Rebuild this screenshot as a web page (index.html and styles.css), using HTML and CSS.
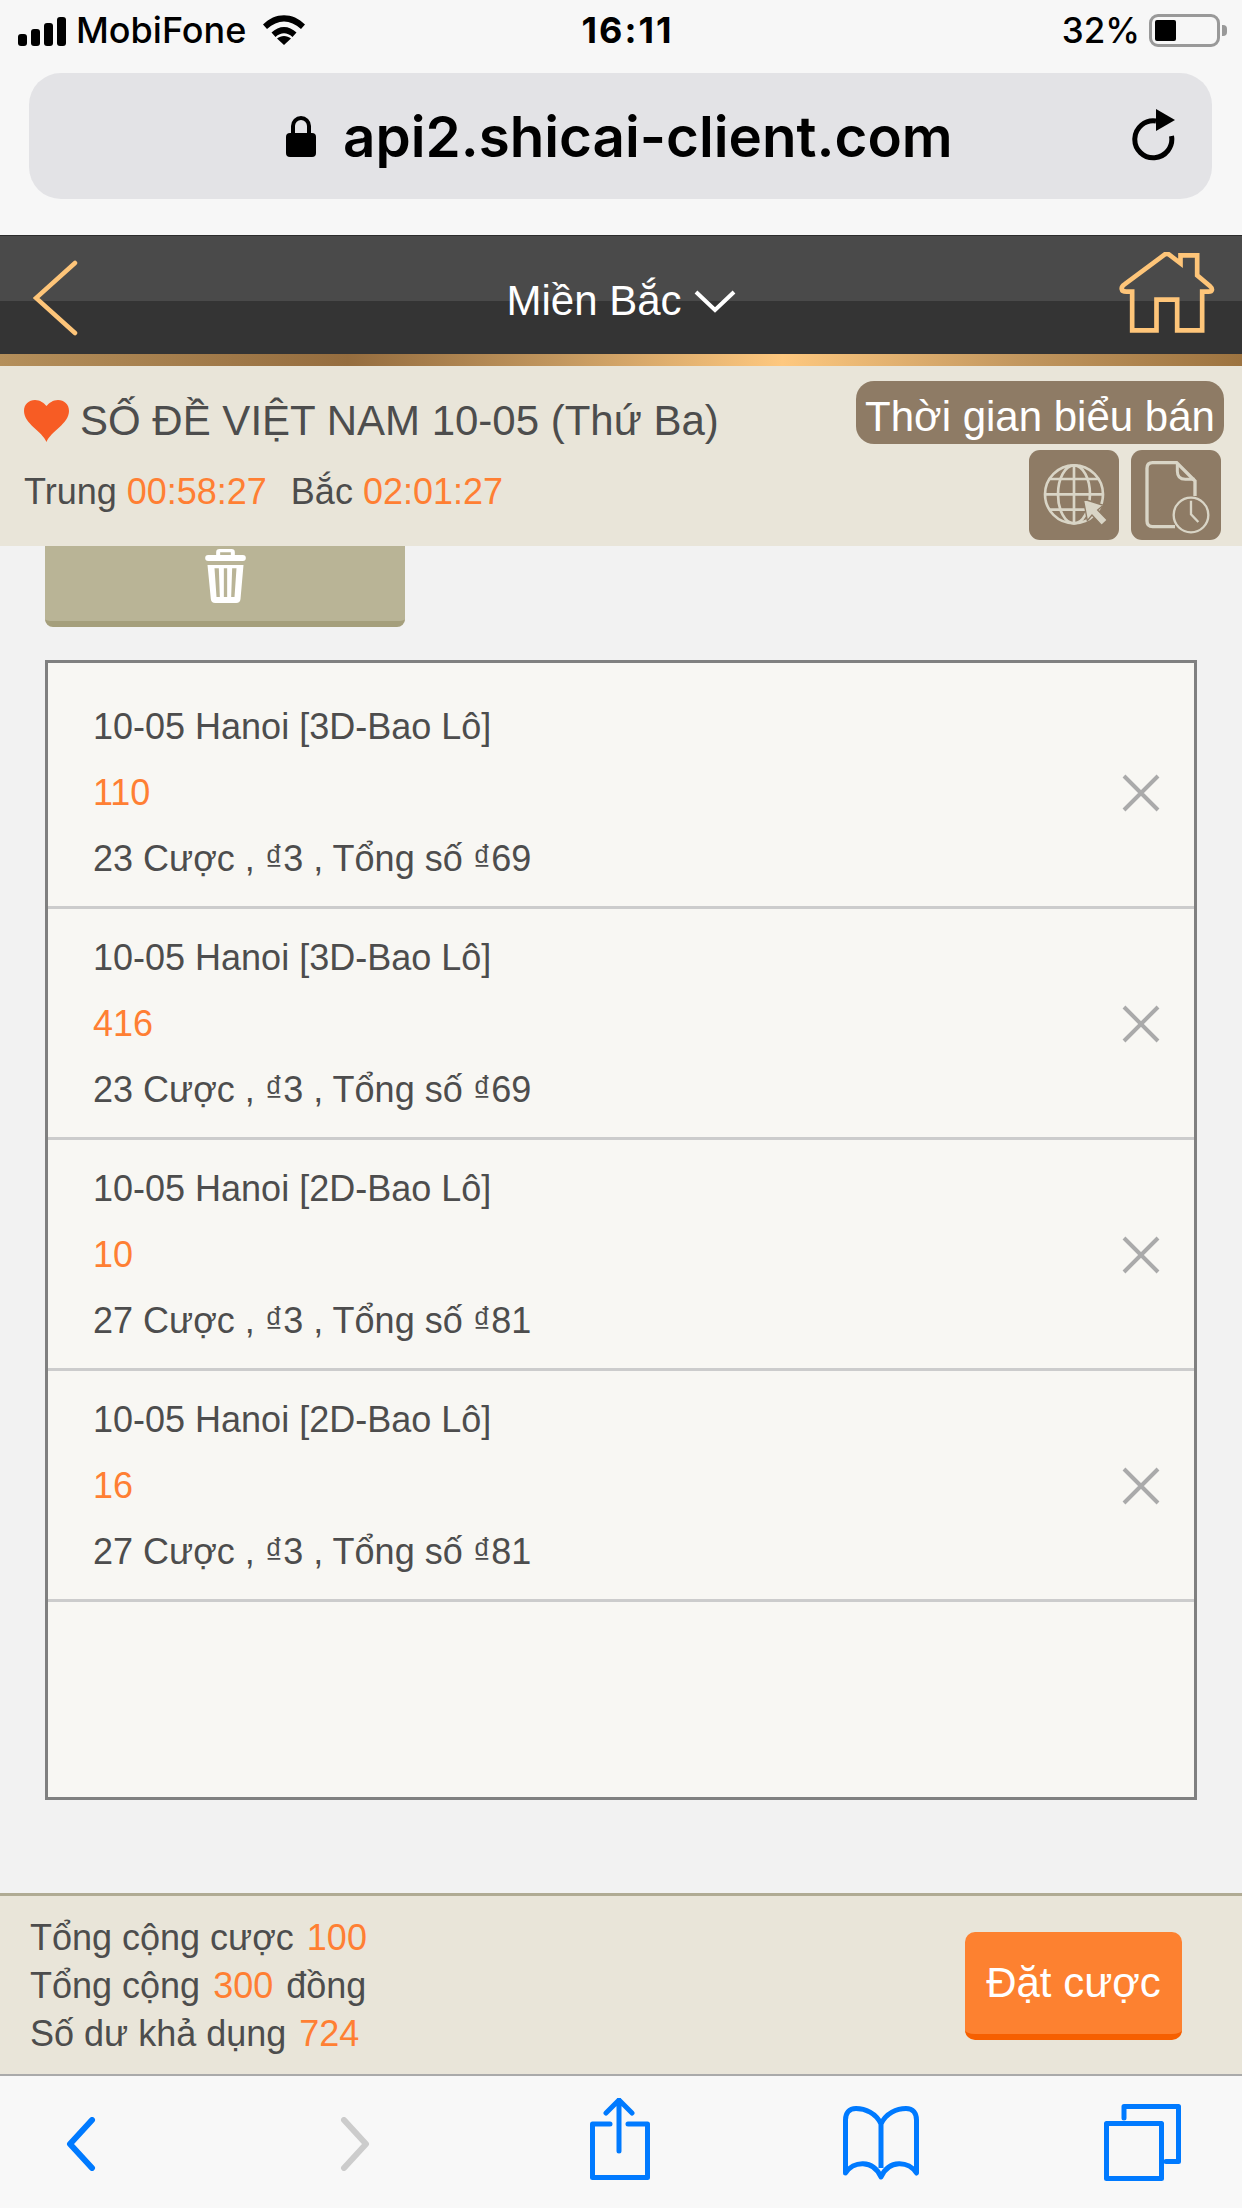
FILE: index.html
```html
<!DOCTYPE html>
<html lang="en">
<head>
    <meta charset="UTF-8">
    <meta name="viewport" content="width=device-width, initial-scale=1.0">
    <title>Số đề</title>
    <link rel="stylesheet" href="styles.css">
</head>
<body>
    <div class="chrome">
        <div class="status">
            <div class="status-left">
                <div class="signal">
                    <span class="bar bar1"></span><span class="bar bar2"></span><span class="bar bar3"></span><span class="bar bar4"></span>
                </div>
                <span class="carrier">MobiFone</span>
                <svg class="wifi" viewBox="0 0 42 30"><path d="M0 9.500C12-3 30-3 42 9.500l-4 4.500C27 4 15 4 4 14z"/><path d="M8.500 17.500C16 10 26 10 33.500 17.500l-4 4.500C24 17 18 17 12.500 22z"/><path d="M21 30l-7-6.500c4-3.500 10-3.500 14 0z"/></svg>
            </div>
            <div class="clock">16:11</div>
            <div class="status-right">
                <span class="percent">32%</span>
                <div class="battery"><span class="battery-fill"></span></div>
                <span class="battery-nub"></span>
            </div>
        </div>
        <div class="urlbar">
            <svg class="lock" viewBox="0 0 30 41"><path d="M7 20V10a8 8 0 0 1 16 0v10" fill="none" stroke="#000" stroke-width="4"/><rect y="17" width="30" height="24" rx="4"/></svg>
            <span class="url">api2.shicai-client.com</span>
            <svg class="reload" viewBox="0 0 47 55"><path d="M39.500 27A18.500 18.500 0 1 1 24 12" fill="none" stroke="#000" stroke-width="5"/><path d="M24 0l19 11-19 11z"/></svg>
        </div>
    </div>

    <div class="navbar">
        <div class="nav-side">
            <svg class="nav-back" viewBox="0 0 46 78"><path d="M42 4L3 39l39 35" fill="none" stroke="#fec579" stroke-width="4.500" stroke-linecap="round"/></svg>
        </div>
        <div class="nav-title">
            <span>Miền Bắc</span>
            <svg class="nav-caret" viewBox="0 0 42 24"><path d="M2 3l19 18L40 3" fill="none" stroke="#fff" stroke-width="4"/></svg>
        </div>
        <div class="nav-side nav-side-right">
            <svg class="nav-home" viewBox="88 487 287 243"><path d="M110 606C92 606 92 592 104 584L224 495c4-3 10-3 14 0l34 26V497h50v60l38 32c10 9 8 17-4 17H337V722H262V630H200V722H127V606z" fill="none" stroke="#fec579" stroke-width="14"/></svg>
        </div>
    </div>
    <div class="goldbar"></div>

    <div class="strip">
        <div class="strip-left">
            <div class="game-title">
                <svg class="heart" viewBox="0 0 45 42"><path d="M22.500 42C18 31 0 24 0 11 0 4 5 0 11 0c5 0 9 3 11.500 6C25 3 29 0 34 0c6 0 11 4 11 11 0 13-18 20-22.500 31z"/></svg>
                <span>SỐ ĐỀ VIỆT NAM 10-05 (Thứ Ba)</span>
            </div>
            <div class="timers">
                Trung <span class="hl">00:58:27</span><span class="timer-gap"></span>Bắc <span class="hl">02:01:27</span>
            </div>
        </div>
        <div class="strip-right">
            <a class="schedule-btn">Thời gian biểu bán</a>
            <div class="icon-btns">
                <a class="icon-btn">
                    <svg viewBox="87 270 270 270" fill="none" stroke="#d9d5c6" stroke-width="8">
                        <circle cx="222" cy="403" r="87"/>
                        <ellipse cx="222" cy="403" rx="48" ry="87"/>
                        <path d="M222 316V490M135 403H309M150 357H294M150 449H294"/>
                        <path d="M250 417l60 19-17 14 29 30-17 16-29-31-14 17z" fill="#d9d5c6" stroke="#8e7b65" stroke-width="4"/>
                    </svg>
                </a>
                <a class="icon-btn">
                    <svg viewBox="393 270 270 270" fill="none" stroke="#d9d5c6" stroke-width="10">
                        <path d="M525 500H458q-17 0-17-17V325q0-17 17-17h72l55 55v45"/>
                        <path d="M532 312v22q0 24 24 24h28" stroke-width="9"/>
                        <circle cx="573" cy="465" r="52" stroke-width="7"/>
                        <path d="M573 422V463l22 23" stroke-width="7"/>
                    </svg>
                </a>
            </div>
        </div>
    </div>

    <div class="main">
        <a class="trash-btn">
            <svg viewBox="105 58 122 162"><path fill-rule="evenodd" d="M138 76V68q0-10 10-10h36q10 0 10 10v8h24q9 0 9 9t-9 9H114q-9 0-9-9t9-9zm12-8v8h32v-8zM112 106H220l-9 102q-1 12-13 12H135q-12 0-13-12zm21 10l6 86h10l-3-86zm28 0v86h10v-86zm25 0l-3 86h10l6-86z"/></svg>
        </a>
        <div class="bet-list">
            <div class="bet-row">
                <div class="bet-info">
                    <p>10-05 Hanoi [3D-Bao Lô]</p>
                    <p class="hl">110</p>
                    <p>23 Cược , ₫3 , Tổng số ₫69</p>
                </div>
                <svg class="bet-remove" viewBox="0 0 38 38"><path d="M2 2l34 34M36 2L2 36" stroke="#aaa" stroke-width="4"/></svg>
            </div>
            <div class="bet-row">
                <div class="bet-info">
                    <p>10-05 Hanoi [3D-Bao Lô]</p>
                    <p class="hl">416</p>
                    <p>23 Cược , ₫3 , Tổng số ₫69</p>
                </div>
                <svg class="bet-remove" viewBox="0 0 38 38"><path d="M2 2l34 34M36 2L2 36" stroke="#aaa" stroke-width="4"/></svg>
            </div>
            <div class="bet-row">
                <div class="bet-info">
                    <p>10-05 Hanoi [2D-Bao Lô]</p>
                    <p class="hl">10</p>
                    <p>27 Cược , ₫3 , Tổng số ₫81</p>
                </div>
                <svg class="bet-remove" viewBox="0 0 38 38"><path d="M2 2l34 34M36 2L2 36" stroke="#aaa" stroke-width="4"/></svg>
            </div>
            <div class="bet-row">
                <div class="bet-info">
                    <p>10-05 Hanoi [2D-Bao Lô]</p>
                    <p class="hl">16</p>
                    <p>27 Cược , ₫3 , Tổng số ₫81</p>
                </div>
                <svg class="bet-remove" viewBox="0 0 38 38"><path d="M2 2l34 34M36 2L2 36" stroke="#aaa" stroke-width="4"/></svg>
            </div>
        </div>
    </div>

    <div class="summary">
        <div class="totals">
            <p>Tổng cộng cược <span class="hl">100</span></p>
            <p>Tổng cộng <span class="hl">300</span> đồng</p>
            <p>Số dư khả dụng <span class="hl">724</span></p>
        </div>
        <a class="submit-btn">Đặt cược</a>
    </div>

    <div class="toolbar">
        <svg class="tool tool-back" viewBox="0 0 30 54"><path d="M26 3L4 27l22 24" fill="none" stroke="#007aff" stroke-width="6" stroke-linecap="round" stroke-linejoin="round"/></svg>
        <svg class="tool tool-forward" viewBox="0 0 30 54"><path d="M4 3l22 24L4 51" fill="none" stroke="#ccc" stroke-width="6" stroke-linecap="round" stroke-linejoin="round"/></svg>
        <svg class="tool tool-share" viewBox="0 0 60 82" fill="none" stroke="#007aff" stroke-width="5" stroke-linecap="round" stroke-linejoin="round">
            <path d="M20 26H2.500V79.500H57.500V26H38"/>
            <path d="M29 53V2M16 15L29 2l13 13"/>
        </svg>
        <svg class="tool tool-book" viewBox="0 0 76 74" fill="none" stroke="#007aff" stroke-width="5" stroke-linejoin="round">
            <path d="M38 18C33 7 22 2.500 13 2.500 6 2.500 2.500 7 2.500 14V67C10 55 30 53 38 71 46 53 66 55 73.500 67V14C73.500 7 70 2.500 63 2.500 54 2.500 43 7 38 18ZM38 18V62"/>
        </svg>
        <svg class="tool tool-tabs" viewBox="0 0 77 77" fill="none" stroke="#007aff" stroke-width="5" stroke-linecap="round" stroke-linejoin="round">
            <rect x="2.500" y="19.500" width="55" height="55"/>
            <path d="M20 14V2.500H74.500V57.500H62"/>
        </svg>
    </div>
</body>
</html>
```

FILE: styles.css
```css
* {box-sizing: border-box;}

body {
    margin: 0;
    width: 1242px;
    height: 2208px;
    overflow: hidden;
    display: flex;
    flex-direction: column;
    font-family: "Liberation Sans", Arial, sans-serif;
    font-size: 36px;
    color: #4d4d4d;
    background-color: #f2f2f2;
}

p {
    margin: 0;
}

svg {
    display: block;
    flex-shrink: 0;
}

.hl {
    color: #ff7f33;
}

/* browser chrome */
.chrome {
    height: 235px;
    background-color: #f7f7f7;
    padding-top: 13px;
    font-family: Inter, "Liberation Sans", sans-serif;
    color: #000;
}

.status {
    display: flex;
    align-items: center;
    height: 34px;
    font-size: 36px;
}

.status-left, .status-right {
    flex: 1;
    display: flex;
    align-items: center;
}

.status-left {
    padding-left: 18px;
}

.status-right {
    justify-content: flex-end;
    padding-right: 15px;
}

.signal {
    display: flex;
    align-items: flex-end;
    gap: 4px;
    height: 29px;
    margin-top: 2px;
}

.bar {
    width: 9px;
    border-radius: 3px;
    background-color: #000;
}

.bar1 { height: 12px; }
.bar2 { height: 17px; }
.bar3 { height: 23px; }
.bar4 { height: 29px; }

.carrier {
    margin-left: 10px;
    font-weight: 500;
}

.wifi {
    width: 42px;
    height: 30px;
    margin-left: 17px;
}

.clock {
    font-weight: 700;
    letter-spacing: 2px;
    margin-left: 10px;
}

.percent {
    font-size: 35px;
    font-weight: 500;
}

.battery {
    width: 71px;
    height: 33px;
    margin-left: 9px;
    padding: 3px;
    border: 3px solid #999;
    border-radius: 9px;
}

.battery-fill {
    display: block;
    width: 21px;
    height: 21px;
    border-radius: 2px;
    background-color: #000;
}

.battery-nub {
    width: 5px;
    height: 11px;
    margin-left: 2px;
    border-radius: 0 4px 4px 0;
    background-color: #999;
}

.urlbar {
    display: flex;
    align-items: center;
    height: 126px;
    margin: 26px 30px 0 29px;
    padding-left: 257px;
    border-radius: 32px;
    background-color: #e3e3e6;
}

.lock {
    width: 30px;
    height: 41px;
}

.url {
    margin-left: 27px;
    font-size: 56.5px;
    font-weight: 600;
}

.reload {
    width: 47px;
    height: 55px;
    margin-left: auto;
    margin-right: 33px;
}

/* nav */
.navbar {
    display: flex;
    align-items: center;
    height: 119px;
    border-top: 1px solid #2c2c2c;
    background: linear-gradient(#4a4a4a 0, #4a4a4a 65px, #343434 65px);
    color: #fff;
    font-size: 42px;
}

.nav-side {
    flex: 1;
    display: flex;
}

.nav-side-right {
    justify-content: flex-end;
}

.nav-back {
    width: 46px;
    height: 78px;
    margin: 6px 0 0 33px;
}

.nav-home {
    width: 96px;
    height: 81px;
    margin: 0 27px 6px 0;
}

.nav-title {
    display: flex;
    align-items: center;
    gap: 12px;
    margin-top: 11px;
}

.nav-caret {
    width: 42px;
    height: 24px;
}

.goldbar {
    height: 12px;
    background: linear-gradient(to right, #b48f5b 0%, #956d3f 28%, #c2975f 45%, #fec87f 63%, #c2975f 82%, #9c7340 100%);
}

/* game info strip */
.strip {
    position: relative;
    z-index: 1;
    display: flex;
    justify-content: space-between;
    height: 180px;
    padding: 15px 18px 0 24px;
    background-color: #e9e5d9;
}

.game-title {
    display: flex;
    align-items: center;
    gap: 11px;
    margin-top: 16px;
    font-size: 42px;
}

.heart {
    width: 45px;
    height: 42px;
    fill: #f75c24;
}

.timers {
    margin-top: 26px;
}

.timer-gap {
    display: inline-block;
    width: 24px;
}

.strip-right {
    display: flex;
    flex-direction: column;
    align-items: flex-end;
    gap: 6px;
}

.schedule-btn {
    width: 368px;
    height: 63px;
    border-radius: 18px;
    background-color: #8e7b65;
    color: #fff;
    font-size: 42px;
    line-height: 72px;
    text-align: center;
}

.icon-btns {
    display: flex;
    gap: 12px;
    margin-right: 3px;
}

.icon-btn {
    width: 90px;
    height: 90px;
    border-radius: 11px;
    background-color: #8e7b65;
}

/* bet list */
.main {
    flex: 1;
    padding: 0 45px;
}

.trash-btn {
    display: flex;
    justify-content: center;
    width: 360px;
    height: 81px;
    padding-top: 3px;
    border-bottom: 6px solid #a59f7c;
    border-radius: 0 0 8px 8px;
    background-color: #b9b496;
}

.trash-btn svg {
    width: 41px;
    height: 54px;
    fill: #fff;
}

.bet-list {
    height: 1140px;
    width: 1152px;
    margin-top: 33px;
    padding-top: 15px;
    border: 3px solid #808080;
    background-color: #f8f7f3;
}

.bet-row {
    display: flex;
    align-items: center;
    justify-content: space-between;
    height: 231px;
    padding: 0 34px 0 45px;
    border-bottom: 3px solid #ccc;
}

.bet-info {
    display: flex;
    flex-direction: column;
    gap: 25px;
    line-height: 41px;
}

.bet-remove {
    width: 38px;
    height: 38px;
    margin-top: 2px;
}

/* bottom */
.summary {
    display: flex;
    align-items: center;
    justify-content: space-between;
    height: 183px;
    padding: 0 60px 0 30px;
    border-top: 3px solid #b0ab94;
    border-bottom: 2px solid #aaa;
    background-color: #e9e5d9;
}

.totals {
    margin-top: 1px;
    line-height: 48px;
}

.totals .hl {
    margin: 0 3px;
}

.submit-btn {
    width: 217px;
    height: 108px;
    margin-top: 1px;
    border-bottom: 6px solid #f65f00;
    border-radius: 10px;
    background-color: #fd8130;
    color: #fff;
    font-size: 42px;
    line-height: 102px;
    text-align: center;
}

.toolbar {
    display: flex;
    align-items: flex-start;
    height: 132px;
    background-color: #f8f8f8;
}

.tool-back, .tool-forward {
    width: 30px;
    height: 54px;
    margin-top: 41px;
}

.tool-back { margin-left: 66px; }
.tool-forward { margin-left: 244px; }

.tool-share {
    width: 60px;
    height: 82px;
    margin: 22px 0 0 220px;
}

.tool-book {
    width: 76px;
    height: 74px;
    margin: 30px 0 0 193px;
}

.tool-tabs {
    width: 77px;
    height: 77px;
    margin: 28px 0 0 185px;
}
```
